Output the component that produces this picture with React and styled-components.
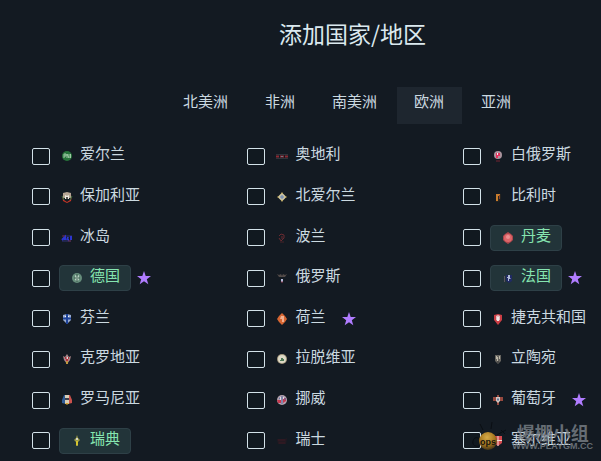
import React, { useState } from 'react';
import styled, { createGlobalStyle } from 'styled-components';

const GlobalStyle = createGlobalStyle`
  * {
    box-sizing: border-box;
  }

  body {
    margin: 0;
    background: #131a22;
    color: #cbd9e0;
    font-family: 'Noto Sans CJK SC', 'Noto Sans', sans-serif;
    font-size: 15px;
  }
`;

const Page = styled.main`
  position: relative;
  display: flex;
  flex-direction: column;
  min-height: 100vh;
  overflow: hidden;
`;

const Title = styled.h1`
  margin: 0;
  padding: 16px 0 0 104px;
  color: #dbe9ef;
  font-size: 23px;
  font-weight: 400;
  line-height: 34px;
  text-align: center;
`;

const Tabs = styled.nav`
  display: flex;
  justify-content: center;
  gap: 2px;
  padding: 37px 0 12px 94px;
`;

const Tab = styled.button`
  height: 37px;
  padding: 0 18px 10px 17px;
  border: 0;
  background: ${(props) => (props.$active ? '#1e262f' : 'transparent')};
  color: inherit;
  font: inherit;
  line-height: 27px;
  white-space: nowrap;
  cursor: pointer;
`;

const CountryGrid = styled.div`
  display: grid;
  flex: 1;
  grid-template-columns: 1fr 1fr auto;
  grid-auto-rows: minmax(40px, 1fr);
  padding: 0 5px 0 32px;
`;

const Row = styled.div`
  display: flex;
  align-items: center;
`;

const Checkbox = styled.input`
  appearance: none;
  flex: none;
  width: 18px;
  height: 17px;
  margin: 0 9px 0 0;
  border: 1px solid #d3e2e9;
  border-radius: 2px;
  background: #111920;
  cursor: pointer;

  &:checked {
    background: #86e5b0;
  }
`;

const Name = styled.label`
  display: flex;
  align-items: center;
  gap: 7px;
  height: 26px;
  padding: ${(props) => (props.$tagged ? '0 10px 0 11px' : '0 10px 0 2px')};
  border: ${(props) => (props.$tagged ? '1px solid #2e4047' : '0')};
  border-radius: 4px;
  background: ${(props) => (props.$tagged ? '#223439' : 'transparent')};
  color: ${(props) => (props.$tagged ? '#86e5b0' : 'inherit')};
  white-space: nowrap;
  cursor: pointer;
`;

const NameText = styled.span`
  padding-bottom: 6px;
  line-height: 20px;
`;

const Crest = styled.svg`
  flex: none;
  width: 12px;
  height: 12px;
`;

const StarIcon = styled.svg`
  flex: none;
  width: 14px;
  height: 14px;
  margin-left: 6px;
  fill: #b07cff;
`;

const Watermark = styled.div`
  position: absolute;
  right: 8px;
  bottom: 8px;
  display: flex;
  align-items: flex-end;
  pointer-events: none;
`;

const WatermarkText = styled.div`
  display: flex;
  flex-direction: column;
  align-items: center;
  margin-left: 4px;
  padding-bottom: 2px;
  color: #7b8289;
  opacity: 0.8;
`;

const WatermarkName = styled.span`
  font-size: 18px;
  font-weight: 700;
  line-height: 20px;
`;

const WatermarkUrl = styled.span`
  font-family: 'Liberation Sans', sans-serif;
  font-size: 9px;
  font-weight: 700;
  line-height: 9px;
`;

const crests = {
  ireland: (
    <>
      <circle cx="6" cy="6" r="5" fill="#26733a" />
      <path d="M3 8V4h2v2H3m3 2V4l2 4V4m1.500 0v4" fill="none" stroke="#9fc9a6" />
    </>
  ),
  austria: (
    <>
      <path d="M0 4.500h12M0 8.500h12" stroke="#30343b" />
      <path d="M0 6.500h3M4 6.500h4M9 6.500h3" stroke="#8c2a34" strokeWidth="2" />
      <path d="M5 6.500h2" stroke="#777780" />
    </>
  ),
  belarus: (
    <>
      <circle cx="6" cy="5" r="4" fill="#a8929c" />
      <path d="M4 3h4v3H6v2H4z" fill="#e2315d" />
      <path d="M5 3h1v2H5z" fill="#eee" />
      <path d="M4 11h4" stroke="#742331" />
    </>
  ),
  bulgaria: (
    <>
      <path d="M2 2l4-1 4 1v5H2z" fill="#b5a493" />
      <path d="M1 4l2 5 3 2 3-2 2-5-1 6-4 2-4-2z" fill="#c63627" />
      <path d="M1 5l2 4M11 5L9 9" stroke="#347443" />
      <path d="M4 4l2 1 2-1v4H4z" fill="#ece9de" />
      <path d="M5 6h2v2H5z" fill="#55524e" />
    </>
  ),
  northernIreland: (
    <>
      <path d="M6 1l2 3 3 2-3 2-2 3-2-3-3-2 3-2z" fill="#cbb66f" />
      <circle cx="6" cy="6" r="3" fill="#c9c3a9" />
      <path d="M6 4v4M4 6h4" stroke="#6383b5" />
    </>
  ),
  belgium: (
    <>
      <path d="M4 3h5v4l-1 3-2 1H4z" fill="#26231f" />
      <path d="M4 3h4v2H6v5H4z" fill="#c77c2d" />
      <path d="M7 4h1v4H7z" fill="#8c4328" />
    </>
  ),
  iceland: (
    <>
      <path d="M2 4h9M1 9h9" stroke="#303276" />
      <path d="M1 8l3-3v3m2 0l1-3m0 3h1m1-3h2m-1 0v3" fill="none" stroke="#2c35cf" strokeWidth="2" />
      <path d="M1 4h3m3 5h3" stroke="#6b2942" />
    </>
  ),
  poland: (
    <>
      <path d="M3 4l2-2 3 1v3L5 9 3 6m3-2v3" fill="none" stroke="#692b31" />
      <path d="M5 5h1m-2 3h1m-1 2h4" stroke="#482229" />
    </>
  ),
  denmark: (
    <>
      <path d="M6 0l3 2 2 2v4l-2 2-3 2-3-2-2-2V4l2-2z" fill="#ad474c" />
      <circle cx="6" cy="6" r="4" fill="#dd666a" />
      <circle cx="6" cy="5" r="2" fill="#ec8f90" />
    </>
  ),
  germany: (
    <>
      <ellipse cx="6" cy="6" rx="5" ry="5" fill="#668d7b" />
      <path d="M4 3l2 1 2-1v5L6 9 4 8z" fill="#b9d2c2" />
      <path d="M6 2v8M3 6h2m2 0h2" stroke="#405e52" />
    </>
  ),
  russia: (
    <>
      <path d="M1 2l2 1 2-1 1 2 1-2 2 1 2-1-2 3H3z" fill="#514a48" />
      <path d="M5 7h2v3H5z" fill="#b6bddd" />
      <path d="M5 10h2" stroke="#8e3c4e" />
    </>
  ),
  france: (
    <>
      <path d="M2 4h1v6H2z" fill="#5b5661" />
      <path d="M4 3h6v6l-3 2-3-2z" fill="#202a64" />
      <path d="M6 3h2v3l1 1H7v2H6V6H5V5h1z" fill="#aeb8d5" />
    </>
  ),
  finland: (
    <>
      <path d="M2 2l4-1 4 1v5l-4 4-4-4z" fill="#98abd0" />
      <path d="M6 1v10M2 5.500h8" stroke="#1e4399" strokeWidth="2" />
      <path d="M4 3h1v1H4m3-1h1v1H7" fill="#f2f5fa" />
    </>
  ),
  netherlands: (
    <>
      <path d="M6 0l3 3 2 3-2 3-3 3-3-3-2-3 2-3z" fill="#d76632" />
      <path d="M5 3h3v6H6V6H4z" fill="#f2b190" />
    </>
  ),
  czechia: (
    <>
      <path d="M2 2l4-1 4 1v5l-4 5-4-5z" fill="#cb3e45" />
      <path d="M4 3l2-1 2 1v4l-2 1-2-1z" fill="#e6b9bc" />
      <path d="M5 4h2v4H5z" fill="#f2e9e9" />
    </>
  ),
  croatia: (
    <>
      <path d="M2 3l2 1 2-3 2 3 2-1-1 4-3 4-3-4z" fill="#a78488" />
      <path d="M4 4h1v2H4m3-2h1v2H7M5 6h2v2H5" fill="#b32c3a" />
      <path d="M6 4h1v2H6z" fill="#e4e0db" />
      <path d="M5 8h2v3H5z" fill="#be963f" />
    </>
  ),
  latvia: (
    <>
      <circle cx="6" cy="6" r="5" fill="#a89b80" />
      <circle cx="6" cy="6" r="4" fill="#dedac7" />
      <path d="M4 7h1V5h2v1h1v2H4z" fill="#4d7855" />
    </>
  ),
  lithuania: (
    <>
      <path d="M3 2h6v6l-3 3-3-3z" fill="#66645f" />
      <path d="M4 3h1v1h1v4H5V6H4zm3 0h1v3H7z" fill="#bcb7a8" />
      <path d="M5 9h2" stroke="#303035" />
    </>
  ),
  romania: (
    <>
      <path d="M1 6l2-5h2v9L1 9z" fill="#2e5b97" />
      <path d="M7 1h2l2 5v3l-4 1z" fill="#cb514c" />
      <path d="M4 1h4v9H4z" fill="#d8ceb7" />
      <path d="M4 4h4v2H4z" fill="#3e434d" />
      <path d="M4 9h4l-2 2z" fill="#d5a22f" />
    </>
  ),
  norway: (
    <>
      <circle cx="6" cy="6" r="5" fill="#b3a2ae" />
      <path d="M1 6h4v3H2m5 0l3-2V4H7" fill="#c63a50" />
      <path d="M6 2v8M3 4l2 1m3 0h2" stroke="#5568a5" />
      <path d="M4 3h1v3H4m3-3h1v2H7" fill="#e5dae0" />
    </>
  ),
  portugal: (
    <>
      <path d="M5 1h2v2h4v4H7v4H5V7H1V3h4z" fill="#96493f" />
      <path d="M4 3h4v4L6 9 4 7z" fill="#d5c8c2" />
      <path d="M6 4v3M5 5.500h2" stroke="#5f789d" />
    </>
  ),
  sweden: (
    <>
      <path d="M6 0l1 3 2 2-2 2v4H5V7L3 5l2-2z" fill="#9b9b47" />
      <path d="M5 3h2v2H5z" fill="#d7d6bf" />
      <path d="M5 6h2v4H5z" fill="#d5c52d" />
    </>
  ),
  switzerland: (
    <>
      <path d="M1 4h8l2-1-1 6H2z" fill="#241921" />
      <path d="M2 5h7M3 8h6" stroke="#381b24" />
    </>
  ),
  serbia: (
    <>
      <path d="M2 1h8v7l-4 3-4-3z" fill="#d4474d" />
      <path d="M6 1v10M2 5.500h8" stroke="#f0dcd3" />
    </>
  ),
};

const tabs = ['北美洲', '非洲', '南美洲', '欧洲', '亚洲'];

const countries = [
  { id: 'ireland', name: '爱尔兰' },
  { id: 'austria', name: '奥地利' },
  { id: 'belarus', name: '白俄罗斯' },
  { id: 'bulgaria', name: '保加利亚' },
  { id: 'northernIreland', name: '北爱尔兰' },
  { id: 'belgium', name: '比利时' },
  { id: 'iceland', name: '冰岛' },
  { id: 'poland', name: '波兰' },
  { id: 'denmark', name: '丹麦', tagged: true },
  { id: 'germany', name: '德国', tagged: true, star: true },
  { id: 'russia', name: '俄罗斯' },
  { id: 'france', name: '法国', tagged: true, star: true },
  { id: 'finland', name: '芬兰' },
  { id: 'netherlands', name: '荷兰', star: true },
  { id: 'czechia', name: '捷克共和国' },
  { id: 'croatia', name: '克罗地亚' },
  { id: 'latvia', name: '拉脱维亚' },
  { id: 'lithuania', name: '立陶宛' },
  { id: 'romania', name: '罗马尼亚' },
  { id: 'norway', name: '挪威' },
  { id: 'portugal', name: '葡萄牙', star: true },
  { id: 'sweden', name: '瑞典', tagged: true },
  { id: 'switzerland', name: '瑞士' },
  { id: 'serbia', name: '塞尔维亚' },
];

const Country = ({ id, name, tagged, star }) => {
  return (
    <Row>
      <Checkbox type="checkbox" id={id} />
      <Name htmlFor={id} $tagged={tagged}>
        <Crest viewBox="0 0 12 12" aria-hidden="true">{crests[id]}</Crest>
        <NameText>{name}</NameText>
      </Name>
      {star && (
        <StarIcon viewBox="0 0 14 14" aria-hidden="true">
          <path d="M7 0l1.700 5H14L9.800 8.200l1.500 5.100L7 10.200l-4.300 3.100 1.500-5.100L0 5h5.300z" />
        </StarIcon>
      )}
    </Row>
  );
};

const BombLogo = () => (
  <svg width="36" height="32" viewBox="0 0 36 32" aria-hidden="true">
    <defs>
      <radialGradient id="bomb" cx="45%" cy="30%" r="70%">
        <stop offset="0" stopColor="#d6ab49" />
        <stop offset="0.600" stopColor="#a6771e" />
        <stop offset="1" stopColor="#443519" />
      </radialGradient>
    </defs>
    <path
      d="M8 25c-5 1-8-1-7-5s4-4 7-2M25 14l5-3 4-2M11 9L8 3M19 8l1-7M29 9l4 4"
      fill="none"
      stroke="#0a0e13"
      strokeWidth="1"
    />
    <circle cx="16" cy="20" r="9" fill="url(#bomb)" />
    <text x="8" y="24" fill="#191610" fontFamily="Liberation Sans, sans-serif" fontSize="9" fontWeight="700">
      ops
    </text>
  </svg>
);

const App = () => {
  const [activeTab, setActiveTab] = useState('欧洲');

  return (
    <Page>
      <GlobalStyle />
      <Title>添加国家/地区</Title>
      <Tabs>
        {tabs.map((tab) => (
          <Tab key={tab} type="button" $active={tab === activeTab} onClick={() => setActiveTab(tab)}>
            {tab}
          </Tab>
        ))}
      </Tabs>
      <CountryGrid>
        {countries.map((country) => (
          <Country key={country.id} {...country} />
        ))}
      </CountryGrid>
      <Watermark>
        <BombLogo />
        <WatermarkText>
          <WatermarkName>爆棚小组</WatermarkName>
          <WatermarkUrl>WWW.PLAYGM.CC</WatermarkUrl>
        </WatermarkText>
      </Watermark>
    </Page>
  );
};

export default App;
